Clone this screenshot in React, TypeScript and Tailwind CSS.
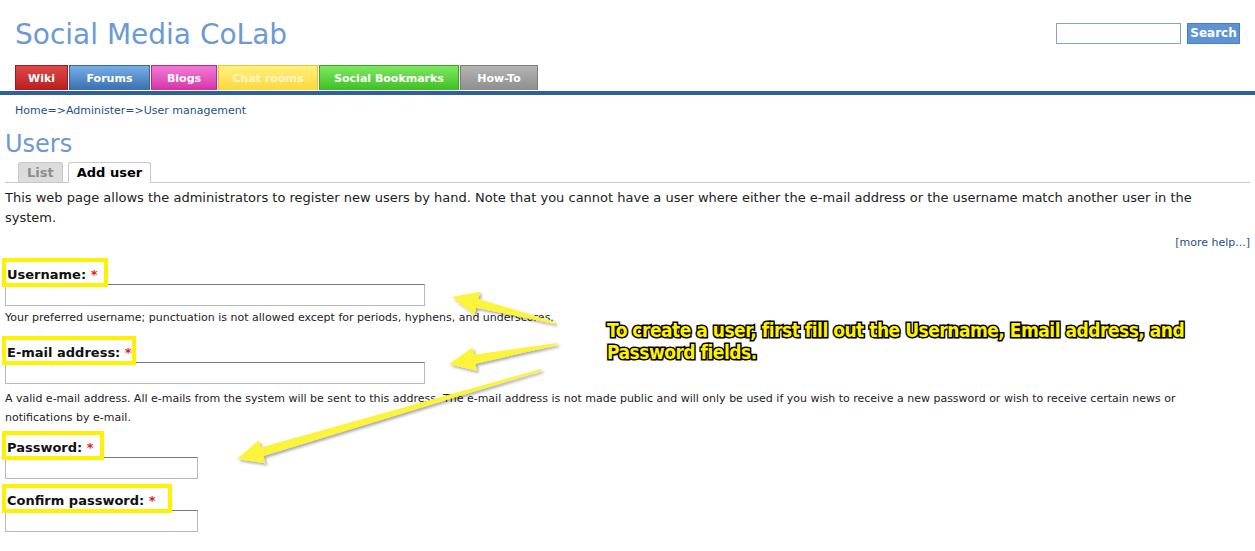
import React from "react";

const verdana = { fontFamily: '"DejaVu Sans", Verdana, sans-serif' };

const navTabs = [
  { label: "Wiki", cls: "w-[53px] bg-gradient-to-b from-[#e04848] to-[#b81c1c] border-[#a01818] text-white" },
  { label: "Forums", cls: "w-[81px] bg-gradient-to-b from-[#78aee6] to-[#3a6fb0] border-[#3566a4] text-white" },
  { label: "Blogs", cls: "w-[66px] bg-gradient-to-b from-[#f07ad8] to-[#d82ea8] border-[#b8288e] text-white" },
  { label: "Chat rooms", cls: "w-[100px] bg-gradient-to-b from-[#fff07a] to-[#fcd83a] border-[#e8c52e] text-[#fff6c8]" },
  { label: "Social Bookmarks", cls: "w-[140px] bg-gradient-to-b from-[#7de860] to-[#3cc11e] border-[#34a81a] text-white" },
  { label: "How-To", cls: "w-[78px] bg-gradient-to-b from-[#b4b4b4] to-[#8e8e8e] border-[#7c7c7c] text-white" },
];

// tapered annotation arrow: tail (x1,y1) -> tip (x2,y2)
function arrowPoints(x1: number, y1: number, x2: number, y2: number) {
  const dx = x2 - x1;
  const dy = y2 - y1;
  const len = Math.hypot(dx, dy);
  const ux = dx / len;
  const uy = dy / len;
  const nx = -uy;
  const ny = ux;
  const headLen = 26;
  const headW = 12;
  const shaftEnd = 4.5;
  const tailW = 1;
  const bx = x2 - ux * headLen;
  const by = y2 - uy * headLen;
  const p = (x: number, y: number) => `${x.toFixed(1)},${y.toFixed(1)}`;
  return [
    p(x1 + nx * tailW, y1 + ny * tailW),
    p(bx + nx * shaftEnd, by + ny * shaftEnd),
    p(bx + nx * headW, by + ny * headW),
    p(x2, y2),
    p(bx - nx * headW, by - ny * headW),
    p(bx - nx * shaftEnd, by - ny * shaftEnd),
    p(x1 - nx * tailW, y1 - ny * tailW),
  ].join(" ");
}

function Field({
  label,
  boxW,
  inputW,
  help,
  mt,
}: {
  label: string;
  boxW: string;
  inputW: string;
  help?: React.ReactNode;
  mt: string;
}) {
  return (
    <div className={mt}>
      <div className={`relative ${boxW} border-[4px] border-[#fff200] -ml-[3px] pl-[1px] pt-[6px] pb-[2px] text-[13px] font-bold text-[#111] leading-[13px]`}>
        {label} <span className="text-[#e02020]">*</span>
      </div>
      <input className={`block ${inputW} h-[22px] border border-[#b9b9b9] border-t-[#7b7b7b] bg-white -mt-[3px]`} />
      {help}
    </div>
  );
}

export default function App() {
  return (
    <div className="relative w-[1255px] h-[551px] overflow-hidden bg-white" style={verdana}>
      <header className="flex justify-between px-[15px] pt-[17px]">
        <h1 className="text-[28px] leading-[36px] text-[#6b9ad6]">Social Media CoLab</h1>
        <div className="flex items-start gap-[6px] pt-[6px] pr-[0px]">
          <input className="w-[125px] h-[21px] border border-[#7ea6cf] bg-white" />
          <button className="h-[21px] w-[53px] bg-[#5f93d8] border border-[#4a7cc0] text-white text-[12px] font-bold leading-[19px]">
            Search
          </button>
        </div>
      </header>

      <nav className="flex gap-[1px] px-[15px] mt-[12px]">
        {navTabs.map((t) => (
          <div
            key={t.label}
            className={`h-[25px] border border-b-0 flex items-center justify-center pt-[2px] text-[11px] font-bold ${t.cls}`}
          >
            {t.label}
          </div>
        ))}
      </nav>
      <div className="h-[4px] mt-[1px] bg-[#30609c]" />

      <div className="px-[15px] pt-[8px] text-[11px] text-[#24508a] leading-[16px]">
        Home=&gt;Administer=&gt;User management
      </div>

      <main className="px-[5px]">
        <h2 className="mt-[10px] text-[24px] leading-[30px] text-[#6b9ad6]">Users</h2>
        <div className="flex items-end gap-[5px] pl-[13px] border-b border-[#c8c8c8] h-[24px]">
          <div className="h-[20px] px-[8px] bg-[#dcdcdc] border border-b-0 border-[#c8c8c8] rounded-t-[3px] text-[13px] font-bold text-[#8c8c8c] leading-[19px]">
            List
          </div>
          <div className="h-[21px] px-[8px] bg-white border border-b-0 border-[#c8c8c8] rounded-t-[3px] text-[13px] font-bold text-black leading-[20px] -mb-[1px]">
            Add user
          </div>
        </div>
        <p className="mt-[5px] text-[13px] leading-[20px] text-[#222] pr-[40px]">
          This web page allows the administrators to register new users by hand. Note that you cannot have a user where either the e-mail address or the username match another user in the system.
        </p>
        <div className="flex justify-end mt-[7px] text-[11px] text-[#24508a] leading-[16px]">[more help...]</div>

        <Field
          mt="mt-[7px]"
          label="Username:"
          boxW="w-[106px]"
          inputW="w-[420px]"
          help={<p className="mt-[5px] text-[11px] leading-[14px] text-[#222]">Your preferred username; punctuation is not allowed except for periods, hyphens, and underscores.</p>}
        />
        <Field
          mt="mt-[11px]"
          label="E-mail address:"
          boxW="w-[134px]"
          inputW="w-[420px]"
          help={
            <p className="mt-[5px] text-[11px] leading-[19px] text-[#222] w-[1195px]">
              A valid e-mail address. All e-mails from the system will be sent to this address. The e-mail address is not made public and will only be used if you wish to receive a new password or wish to receive certain news or notifications by e-mail.
            </p>
          }
        />
        <Field mt="mt-[4px]" label="Password:" boxW="w-[102px]" inputW="w-[193px]" />
        <Field mt="mt-[5px]" label="Confirm password:" boxW="w-[170px]" inputW="w-[193px]" />
      </main>

      <svg className="absolute inset-0 pointer-events-none" width="1255" height="551">
        <defs>
          <filter id="sh" x="-20%" y="-20%" width="140%" height="140%">
            <feDropShadow dx="2" dy="2" stdDeviation="1.5" floodColor="#000" floodOpacity="0.35" />
          </filter>
        </defs>
        <g fill="#fbf43a" filter="url(#sh)">
          <polygon points={arrowPoints(555, 323, 452, 297)} />
          <polygon points={arrowPoints(557, 344, 449, 364)} />
          <polygon points={arrowPoints(541, 370, 237, 459)} />
        </g>
      </svg>

      <div
        className="absolute left-[607px] top-[319px] w-[600px] text-[19px] font-bold leading-[22px] tracking-[-0.5px] text-[#fff200]"
        style={{
          fontFamily: '"Liberation Sans Narrow", "DejaVu Sans Condensed", sans-serif',
          WebkitTextStroke: "3px #000",
          paintOrder: "stroke fill",
          textShadow: "1px 1px 1px #000",
        }}
      >
        To create a user, first fill out the Username, Email address, and Password fields.
      </div>
    </div>
  );
}
